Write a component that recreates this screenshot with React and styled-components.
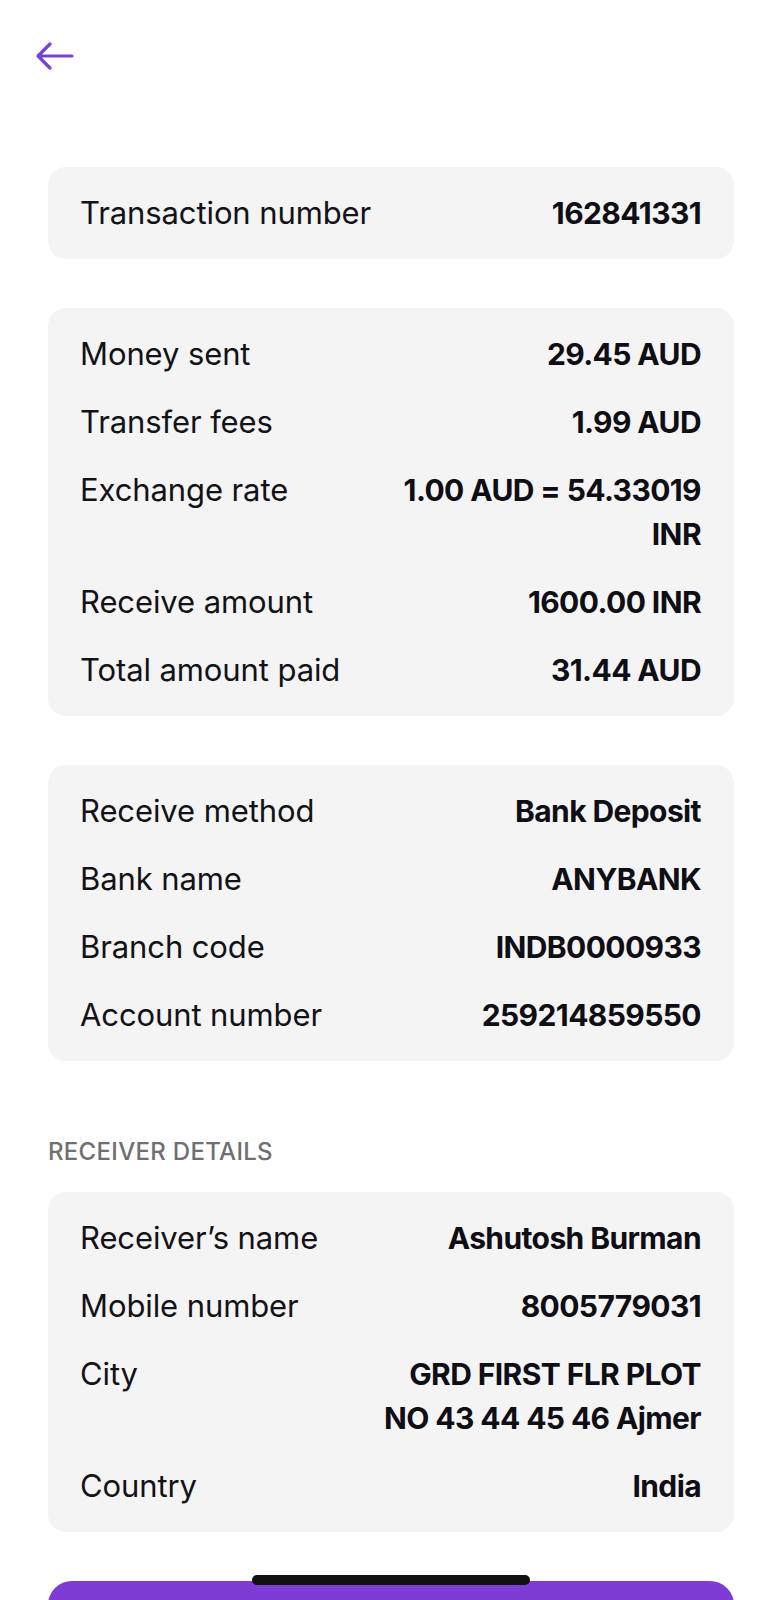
import React from "react";
import styled, { createGlobalStyle } from "styled-components";

const GlobalStyle = createGlobalStyle`
  html, body {
    margin: 0;
    padding: 0;
    background: #ffffff;
  }
  body {
    font-family: Inter, "Noto Sans", sans-serif;
    -webkit-font-smoothing: antialiased;
  }
`;

const sections = [
  [{ label: "Transaction number", value: "162841331" }],
  [
    { label: "Money sent", value: "29.45 AUD" },
    { label: "Transfer fees", value: "1.99 AUD" },
    { label: "Exchange rate", value: "1.00 AUD = 54.33019 INR" },
    { label: "Receive amount", value: "1600.00 INR" },
    { label: "Total amount paid", value: "31.44 AUD" },
  ],
  [
    { label: "Receive method", value: "Bank Deposit" },
    { label: "Bank name", value: "ANYBANK" },
    { label: "Branch code", value: "INDB0000933" },
    { label: "Account number", value: "259214859550" },
  ],
];

const receiver = [
  { label: "Receiver’s name", value: "Ashutosh Burman" },
  { label: "Mobile number", value: "8005779031" },
  { label: "City", value: "GRD FIRST FLR PLOT NO 43 44 45 46 Ajmer" },
  { label: "Country", value: "India" },
];

function DetailCard({ rows }) {
  return (
    <Card>
      {rows.map((row) => (
        <Row key={row.label}>
          <Label>{row.label}</Label>
          <Value>{row.value}</Value>
        </Row>
      ))}
    </Card>
  );
}

export default function App() {
  return (
    <>
      <GlobalStyle />
      <Page>
        <Header>
          <BackButton aria-label="Back">
            <svg width="42" height="32" viewBox="0 0 42 32" fill="none">
              <path
                d="M38 16H4M16 4L4 16L16 28"
                stroke="#7b3fd3"
                strokeWidth="3.2"
                strokeLinecap="round"
                strokeLinejoin="round"
              />
            </svg>
          </BackButton>
        </Header>
        <Content>
          {sections.map((rows, i) => (
            <DetailCard key={i} rows={rows} />
          ))}
          <Section>
            <SectionTitle>RECEIVER DETAILS</SectionTitle>
            <DetailCard rows={receiver} />
          </Section>
          <PrimaryButton aria-label="Done" />
        </Content>
        <HomeIndicator />
      </Page>
    </>
  );
}

const Page = styled.div`
  position: relative;
  width: 782px;
  height: 1600px;
  overflow: hidden;
  background: #ffffff;
`;

const Header = styled.div`
  height: 167px;
  padding: 40px 0 0 34px;
  box-sizing: border-box;
`;

const BackButton = styled.button`
  display: flex;
  background: none;
  border: none;
  padding: 0;
  cursor: pointer;
`;

const Content = styled.div`
  display: flex;
  flex-direction: column;
  gap: 49px;
  padding: 0 48px;
`;

const Card = styled.div`
  display: flex;
  flex-direction: column;
  gap: 24px;
  padding: 24px 33px 24px 32px;
  background: #f4f4f5;
  border-radius: 18px;
`;

const Row = styled.div`
  display: flex;
  justify-content: space-between;
  align-items: flex-start;
  gap: 24px;
`;

const Label = styled.span`
  font-size: 31px;
  line-height: 44px;
  font-weight: 400;
  color: #121217;
  letter-spacing: -0.1px;
  white-space: nowrap;
`;

const Value = styled.span`
  max-width: 330px;
  font-size: 30px;
  line-height: 44px;
  font-weight: 700;
  color: #0e0e14;
  letter-spacing: -0.6px;
  text-align: right;
`;

const Section = styled.div`
  display: flex;
  flex-direction: column;
  gap: 26px;
  margin-top: 28px;
`;

const SectionTitle = styled.h3`
  margin: 0;
  font-size: 24px;
  line-height: 28px;
  font-weight: 500;
  color: #6f6f73;
  letter-spacing: 0.3px;
`;

const PrimaryButton = styled.button`
  height: 96px;
  border: none;
  border-radius: 24px;
  background: #7f3cd5;
`;

const HomeIndicator = styled.div`
  position: absolute;
  left: 252px;
  top: 1575px;
  width: 278px;
  height: 10px;
  border-radius: 5px;
  background: #111111;
`;
